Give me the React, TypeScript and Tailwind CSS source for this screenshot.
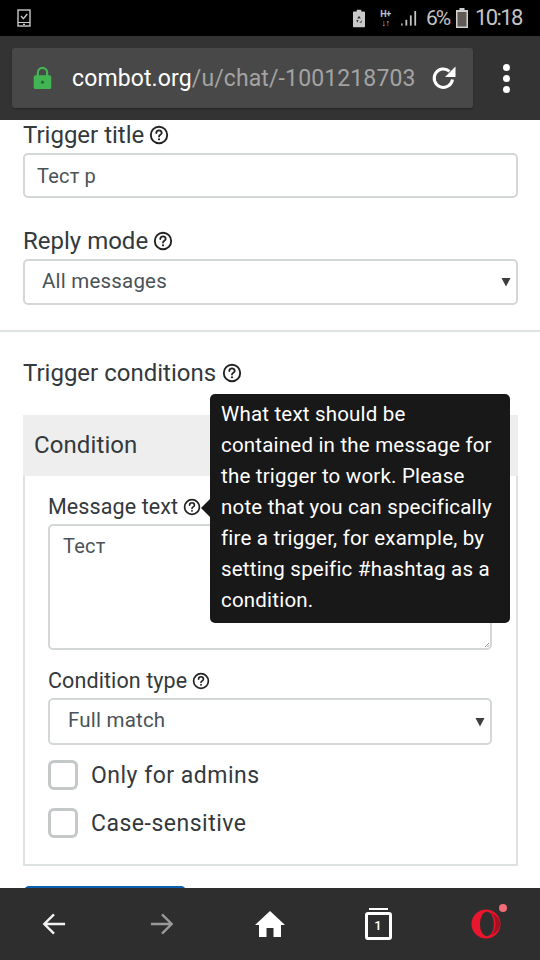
import React from "react";

const font = { fontFamily: "Roboto, sans-serif" };

function Help({ size = 20 }: { size?: number }) {
  return (
    <svg width={size} height={size} viewBox="0 0 20 20" fill="none" className="shrink-0">
      <circle cx="10" cy="10" r="8.2" stroke="#222" strokeWidth="1.9" />
      <path d="M7.3 8a2.7 2.7 0 0 1 5.4 0c0 1.7-2.7 1.9-2.7 3.6" stroke="#222" strokeWidth="1.8" strokeLinecap="round" />
      <circle cx="10" cy="14.3" r="1.1" fill="#222" />
    </svg>
  );
}

function Select({ text, h, pl, size }: { text: string; h: string; pl: string; size: string }) {
  return (
    <div className={`relative flex items-center rounded-[5px] border-2 border-[#d3d7d8] bg-white text-[#4a5358] tracking-[0.2px] pb-[2px] ${h} ${pl} ${size}`}>
      {text}
      <svg width="10" height="10" viewBox="0 0 10 10" className="absolute right-[5px] top-1/2 -translate-y-1/2">
        <path d="M0.5 1h9L5 9.5z" fill="#3d3d3d" />
      </svg>
    </div>
  );
}

function Check({ label }: { label: string }) {
  return (
    <div className="flex items-center gap-[13px] h-[30px]">
      <div className="w-[30px] h-[30px] rounded-[6px] border-[3px] border-[#c4c8c9] bg-white" />
      <span className="pt-[2px] text-[23px] text-[#33393c] tracking-[0.5px]">{label}</span>
    </div>
  );
}

export default function App() {
  return (
    <div className="relative w-[540px] h-[960px] overflow-hidden flex flex-col bg-white" style={font}>
      {/* status bar */}
      <div className="h-[36px] bg-black flex items-center pl-[17px] pr-[18px] shrink-0">
        <svg width="14" height="18" viewBox="0 0 14 18" fill="none">
          <rect x="1" y="1" width="12" height="16" stroke="#c9c9c9" strokeWidth="1.4" />
          <path d="M1 13.5h12M6 15.3h2" stroke="#c9c9c9" strokeWidth="1.2" />
          <path d="M4 7l2.4 2.6L10.3 5" stroke="#c9c9c9" strokeWidth="1.4" />
        </svg>
        <div className="ml-auto flex items-center text-[#c4c4c4]">
          <svg width="12" height="19" viewBox="0 0 13 19" className="mr-[14px]">
            <path d="M4 0h5v2h3a1 1 0 0 1 1 1v15a1 1 0 0 1-1 1H1a1 1 0 0 1-1-1V3a1 1 0 0 1 1-1h3z" fill="#c9c9c9" />
            <path d="M6.5 6.5l2 3H4.500zM3.500 11l2.500 0-1.200 3zM10 11l-1 3H7z" fill="#333" />
          </svg>
          <div className="w-[13px] h-[19px] mr-[9px] flex flex-col items-center leading-none">
            <span className="text-[9px] font-bold leading-[10px] tracking-[-0.5px]">H+</span>
            <span className="text-[9px] font-bold leading-[9px] tracking-[-0.5px]">↓↑</span>
          </div>
          <svg width="16" height="17" viewBox="0 0 18 17" className="mr-[9px]">
            <rect x="0" y="14" width="2" height="2.500" fill="#9a9a9a" />
            <rect x="5" y="10" width="2" height="6.500" fill="#c4c4c4" />
            <rect x="10" y="5" width="2" height="11.500" fill="#c4c4c4" />
            <rect x="15" y="0" width="2" height="16.500" fill="#c4c4c4" />
          </svg>
          <span className="w-[23px] text-[21px] leading-none mr-[7px] tracking-[-2px] whitespace-nowrap">6%</span>
          <svg width="12" height="20" viewBox="0 0 12 20" className="mr-[7px]">
            <path d="M3.500 0h5v2H12v18H0V2h3.500z" fill="#cfcfcf" />
            <rect x="1.500" y="4" width="9" height="14.500" fill="#5f5a55" />
          </svg>
          <span className="w-[47px] text-[22px] leading-none tracking-[-1.6px] whitespace-nowrap">10:18</span>
        </div>
      </div>

      {/* browser toolbar */}
      <div className="h-[84px] bg-[#333333] shrink-0 flex items-center pl-[12px] pr-[30px]">
        <div className="w-[461px] h-[60px] rounded-[3px] bg-[#484848] flex items-center pl-[21px] pr-[16px] shadow-[0_1px_2px_rgba(0,0,0,0.3)]">
          <svg width="19" height="24" viewBox="0 0 20 26" fill="none" className="shrink-0">
            <path d="M5 12V7a5 5 0 0 1 10 0v5" stroke="#43b454" strokeWidth="2.400" />
            <rect x="0.500" y="10" width="19" height="15" rx="2" fill="#43b454" />
            <circle cx="10" cy="17.500" r="1.800" fill="#2b6a36" />
          </svg>
          <span className="ml-[20px] pt-[2px] text-[23px] whitespace-nowrap text-white tracking-[0.12px]">
            combot.org<span className="text-[#a3a3a3]">/u/chat/-1001218703</span>
          </span>
          <svg width="26" height="26" viewBox="0 0 26 26" fill="none" className="ml-auto shrink-0">
            <path d="M21.500 14.500a9.200 9.200 0 1 1-3-8.200" stroke="#fff" strokeWidth="3" />
            <path d="M24.500 1.500v10.500H14z" fill="#fff" />
          </svg>
        </div>
        <div className="ml-auto flex flex-col gap-[4px]">
          <div className="w-[7px] h-[7px] rounded-full bg-white" />
          <div className="w-[7px] h-[7px] rounded-full bg-white" />
          <div className="w-[7px] h-[7px] rounded-full bg-white" />
        </div>
      </div>

      {/* page */}
      <div className="flex-1 overflow-hidden pt-[1px]">
        <div className="pl-[23px] pr-[22px]">
          <div className="flex items-center gap-[5px] h-[28px] text-[24px] text-[#33393c]">
            Trigger title <Help />
          </div>
          <div className="mt-[4px] h-[45px] rounded-[5px] border-2 border-[#d3d7d8] flex items-center pl-[12px] text-[20px] text-[#4a5358] tracking-[0.2px]">
            Тест р
          </div>
          <div className="mt-[29px] flex items-center gap-[5px] h-[28px] text-[24px] text-[#33393c]">
            Reply mode <Help />
          </div>
          <div className="mt-[4px]">
            <Select text="All messages" h="h-[46px]" pl="pl-[17px]" size="text-[20.500px]" />
          </div>
        </div>
        <div className="mt-[25px] h-[2px] bg-[#dde3e3]" />
        <div className="pl-[23px] pr-[22px]">
          <div className="mt-[27px] flex items-center gap-[6px] h-[28px] text-[24px] text-[#33393c]">
            Trigger conditions <Help />
          </div>
          <div className="mt-[28px] h-[451px] border-2 border-t-0 border-[#dde3e3]">
            <div className="-mx-[2px] h-[61px] pb-[2px] bg-[#eeeeee] flex items-center pl-[11px] text-[24px] text-[#33393c] tracking-[0.1px]">
              Condition
            </div>
            <div className="pl-[23px] pr-[24px]">
              <div className="mt-[17px] flex items-center gap-[5px] h-[28px] text-[21.500px] text-[#33393c] tracking-[0.1px]">
                Message text <Help size={18} />
              </div>
              <div className="relative mt-[3px] h-[126px] rounded-[5px] border-2 border-[#d3d7d8] pl-[13px] pt-[5px] text-[20px] text-[#4a5358] tracking-[0.2px]">
                Тест
                <svg width="6" height="6" viewBox="0 0 6 6" className="absolute right-0 bottom-0">
                  <path d="M5 1L1 5M5 3.500L3.500 5" stroke="#777" strokeWidth="0.8" />
                </svg>
              </div>
              <div className="mt-[17px] flex items-center gap-[5px] h-[28px] text-[21.500px] text-[#33393c] tracking-[0.1px]">
                Condition type <Help size={18} />
              </div>
              <div className="mt-[3px]">
                <Select text="Full match" h="h-[47px]" pl="pl-[18px]" size="text-[20.500px]" />
              </div>
              <div className="mt-[15px] flex flex-col gap-[18px]">
                <Check label="Only for admins" />
                <Check label="Case-sensitive" />
              </div>
            </div>
          </div>
          <div className="mt-[20px] ml-[1px] w-[162px] h-[10px] rounded-t-[5px] bg-[#0d5fb0]" />
        </div>
      </div>

      {/* tooltip */}
      <div className="absolute left-[210px] top-[394px] w-[300px] h-[229px] rounded-[5px] bg-[#181818] pl-[11px] pr-[15px] pt-[5px] text-white text-[20.500px] leading-[31px] tracking-[0.2px]">
        What text should be contained in the message for the trigger to work. Please note that you can specifically fire a trigger, for example, by setting speific #hashtag as a condition.
        <div className="absolute left-[-9px] top-[105px] w-0 h-0 border-y-[9px] border-y-transparent border-r-[9px] border-r-[#181818]" />
      </div>

      {/* bottom bar */}
      <div className="h-[72px] bg-[#2e2e2e] shrink-0 relative flex items-center">
        <div className="w-[108px] flex justify-center">
          <svg width="24" height="24" viewBox="0 0 26 26" fill="none">
            <path d="M25 13H3M13 2.500L2.500 13 13 23.500" stroke="#f2f2f2" strokeWidth="2.600" />
          </svg>
        </div>
        <div className="w-[108px] flex justify-center">
          <svg width="24" height="24" viewBox="0 0 26 26" fill="none">
            <path d="M1 13h22M13 2.500L23.500 13 13 23.500" stroke="#999999" strokeWidth="2.600" />
          </svg>
        </div>
        <div className="w-[108px] flex justify-center">
          <svg width="30" height="26" viewBox="0 0 30 26">
            <path d="M15 0L30 14h-4v12h-7.500v-9h-7v9H4V14H0z" fill="#fff" />
          </svg>
        </div>
        <div className="w-[108px] flex justify-center">
          <div className="relative w-[27px] h-[32px]">
            <div className="absolute left-[4px] right-[4px] top-0 h-[2px] bg-white" />
            <div className="absolute inset-x-0 bottom-0 h-[28px] rounded-[3px] border-[3px] border-white flex items-center justify-center text-white text-[13px] font-medium">
              1
            </div>
          </div>
        </div>
        <div className="w-[108px] flex justify-center relative">
          <svg width="30" height="32" viewBox="0 0 32 32">
            <ellipse cx="16" cy="16" rx="15.500" ry="15.500" fill="#e8172d" />
            <ellipse cx="17" cy="16" rx="7.500" ry="13" fill="#2e2e2e" />
            <path d="M21 4c6 2 10 7 10 12s-4 10-10 12c4-3 5-8 5-12s-1-9-5-12z" fill="#a31022" />
          </svg>
          <div className="absolute left-[67px] top-[-4px] w-[8px] h-[8px] rounded-full bg-[#f26d75]" />
        </div>
      </div>
    </div>
  );
}
